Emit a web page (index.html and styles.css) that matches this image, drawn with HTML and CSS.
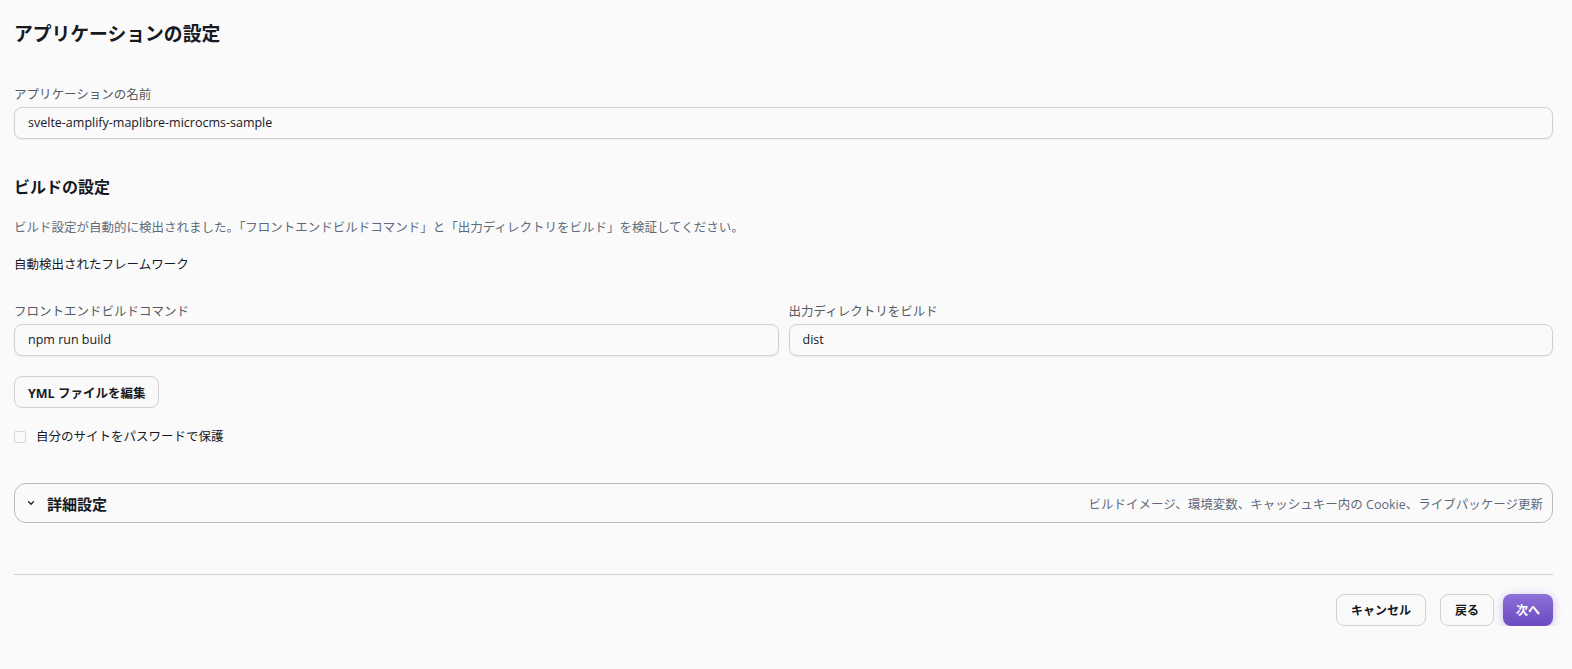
FILE: index.html
```html
<!DOCTYPE html>
<html lang="ja">
<head>
<meta charset="utf-8">
<title>アプリケーションの設定</title>
<link rel="stylesheet" href="styles.css">
</head>
<body>
<div class="page">
  <h1 class="title">アプリケーションの設定</h1>

  <div class="field name-field">
    <label class="label">アプリケーションの名前</label>
    <div class="input">svelte-amplify-maplibre-microcms-sample</div>
  </div>

  <h2 class="subtitle">ビルドの設定</h2>
  <p class="desc">ビルド設定が自動的に検出されました。「フロントエンドビルドコマンド」と「出力ディレクトリをビルド」を検証してください。</p>
  <p class="framework">自動検出されたフレームワーク</p>

  <div class="two-col">
    <div class="field">
      <label class="label">フロントエンドビルドコマンド</label>
      <div class="input">npm run build</div>
    </div>
    <div class="field">
      <label class="label">出力ディレクトリをビルド</label>
      <div class="input">dist</div>
    </div>
  </div>

  <div class="btn-row">
    <button class="btn">YML ファイルを編集</button>
  </div>

  <label class="check">
    <span class="box"></span>
    <span>自分のサイトをパスワードで保護</span>
  </label>

  <div class="expander">
    <svg class="chev" width="8" height="6" viewBox="0 0 8 6"><path d="M1.5 1.8 L4 4.2 L6.5 1.8" fill="none" stroke="#222" stroke-width="1.3" stroke-linecap="round" stroke-linejoin="round"/></svg>
    <span class="exp-title">詳細設定</span>
    <span class="exp-desc">ビルドイメージ、環境変数、キャッシュキー内の Cookie、ライブパッケージ更新</span>
  </div>

  <hr class="divider">

  <div class="actions">
    <button class="btn">キャンセル</button>
    <button class="btn back">戻る</button>
    <button class="btn primary">次へ</button>
  </div>
</div>
</body>
</html>
```

FILE: styles.css
```css
* { box-sizing: border-box; }
html, body { margin: 0; padding: 0; background: #fafafa; }
body {
  font-family: "Open Sans", "Noto Sans CJK JP", sans-serif;
  color: #16191f;
}
.page {
  padding: 19px 19px 0 14px;
}
.title {
  font-size: 18.8px;
  font-weight: 700;
  margin: 0;
  line-height: 30px;
  color: #16191f;
}
.field { display: flex; flex-direction: column; }
.name-field { margin-top: 37px; }
.label {
  font-size: 12.5px;
  color: #545b64;
  line-height: 18px;
  margin-bottom: 3px;
}
.input {
  height: 32px;
  border: 1px solid #d1d1d1;
  border-radius: 8px;
  background: #fafafa;
  box-shadow: 0 1px 2px rgba(0,0,0,0.06);
  padding: 0 13px;
  font-size: 12.5px;
  line-height: 30px;
  color: #16191f;
}
.subtitle {
  font-size: 16px;
  font-weight: 700;
  margin: 36px 0 0;
  line-height: 24px;
}
.desc {
  font-size: 12.5px;
  color: #5f6b7a;
  margin: 20px 0 0;
  line-height: 18px;
}
.framework {
  font-size: 12.5px;
  margin: 19px 0 0;
  line-height: 18px;
}
.two-col {
  display: grid;
  grid-template-columns: 1fr 1fr;
  gap: 10px;
  margin-top: 29px;
}
.btn-row { margin-top: 20px; }
.btn {
  font-family: "Open Sans", "Noto Sans CJK JP", sans-serif;
  font-size: 12.5px;
  font-weight: 700;
  color: #16191f;
  background: #fafafa;
  border: 1px solid #d1d1d1;
  border-radius: 8px;
  height: 32px;
  padding: 0 13px;
  cursor: pointer;
}
.check {
  display: flex;
  align-items: center;
  gap: 10px;
  margin-top: 20px;
  font-size: 12.5px;
  line-height: 18px;
}
.box {
  width: 12px;
  height: 12px;
  border: 1px solid #d5d5d5;
  border-radius: 2px;
  background: #fafafa;
}
.expander {
  margin-top: 37px;
  height: 40px;
  border: 1px solid #b8bcc2;
  border-radius: 12px;
  display: flex;
  align-items: center;
  padding: 0 9px 0 12px;
}
.exp-title {
  font-size: 15px;
  font-weight: 700;
  margin-left: 12px;
}
.exp-desc {
  margin-left: auto;
  font-size: 12.5px;
  color: #5f6b7a;
}
.divider {
  border: none;
  border-top: 1px solid #d1d1d1;
  margin: 51px 0 0;
}
.actions {
  display: flex;
  justify-content: flex-end;
  gap: 14px;
  margin-top: 19px;
}
.actions .btn { font-size: 12px; padding: 0 14px; }
.actions .back { margin-right: -5px; }
.actions .btn.primary {
  color: #fff;
  border: none;
  background: linear-gradient(180deg, #8d70d8 0%, #6c49c0 100%);
  box-shadow: 0 2px 10px rgba(130, 90, 230, 0.4);
  padding: 0 13px;
}
```
